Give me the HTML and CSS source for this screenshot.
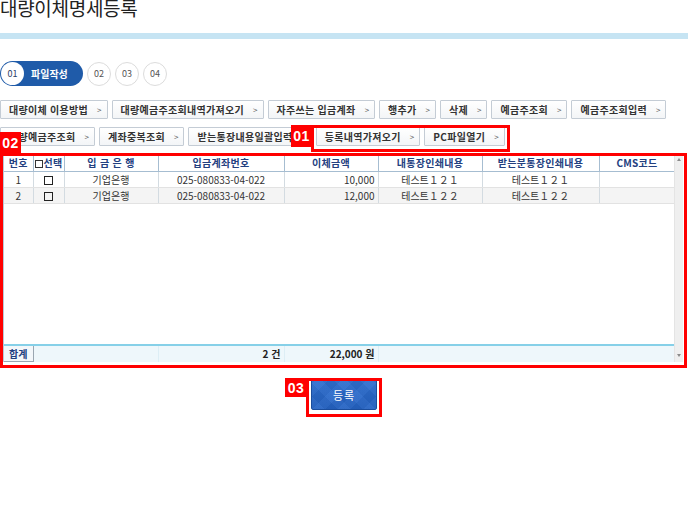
FILE: index.html
```html
<!DOCTYPE html>
<html lang="ko">
<head>
<meta charset="utf-8">
<title>대량이체명세등록</title>
<link rel="stylesheet" href="styles.css">
</head>
<body>
<div class="page">
  <h1 class="title">대량이체명세등록</h1>
  <div class="bar"></div>

  <div class="steps">
    <div class="step-active"><span class="step-num">01</span><span class="step-label">파일작성</span></div>
    <span class="step">02</span>
    <span class="step">03</span>
    <span class="step">04</span>
  </div>

  <div class="toolbar">
    <button class="btn">대량이체 이용방법<i class="chev">&gt;</i></button>
    <button class="btn">대량예금주조회내역가져오기<i class="chev">&gt;</i></button>
    <button class="btn">자주쓰는 입금계좌<i class="chev">&gt;</i></button>
    <button class="btn">행추가<i class="chev">&gt;</i></button>
    <button class="btn">삭제<i class="chev">&gt;</i></button>
    <button class="btn">예금주조회<i class="chev">&gt;</i></button>
    <button class="btn">예금주조회입력<i class="chev">&gt;</i></button>
    <button class="btn">대량예금주조회<i class="chev">&gt;</i></button>
    <button class="btn">계좌중복조회<i class="chev">&gt;</i></button>
    <button class="btn">받는통장내용일괄입력<i class="chev">&gt;</i></button>
    <button class="btn">등록내역가져오기<i class="chev">&gt;</i></button>
    <button class="btn">PC파일열기<i class="chev">&gt;</i></button>
  </div>

  <div class="grid">
    <div class="grid-main">
      <table class="tbl">
        <colgroup>
          <col class="c1"><col class="c2"><col class="c3"><col class="c4"><col class="c5"><col class="c6"><col class="c7"><col class="c8">
        </colgroup>
        <thead>
          <tr>
            <th>번호</th>
            <th><span class="hbox"></span>선택</th>
            <th>입 금 은 행</th>
            <th>입금계좌번호</th>
            <th>이체금액</th>
            <th>내통장인쇄내용</th>
            <th>받는분통장인쇄내용</th>
            <th>CMS코드</th>
          </tr>
        </thead>
        <tbody>
          <tr>
            <td>1</td>
            <td><span class="cbox"></span></td>
            <td>기업은행</td>
            <td>025-080833-04-022</td>
            <td class="num">10,000</td>
            <td>테스트１２１</td>
            <td>테스트１２１</td>
            <td></td>
          </tr>
          <tr class="alt">
            <td>2</td>
            <td><span class="cbox"></span></td>
            <td>기업은행</td>
            <td>025-080833-04-022</td>
            <td class="num">12,000</td>
            <td>테스트１２２</td>
            <td>테스트１２２</td>
            <td></td>
          </tr>
        </tbody>
      </table>
      <div class="grid-space"></div>
      <table class="tbl foot">
        <colgroup>
          <col class="c1"><col class="c2"><col class="c3"><col class="c4"><col class="c5"><col class="c6"><col class="c7"><col class="c8">
        </colgroup>
        <tr>
          <td class="sum-label">합계</td>
          <td colspan="2"></td>
          <td class="num">2 건</td>
          <td class="num">22,000 원</td>
          <td colspan="3"></td>
        </tr>
      </table>
    </div>
    <div class="scrollbar">
      <span class="arrow up"></span>
      <span class="arrow down"></span>
    </div>
  </div>

  <div class="actions">
    <button class="submit">등록</button>
  </div>

  <div class="frame f1"></div>
  <span class="badge b1">01</span>
  <div class="frame f2"></div>
  <span class="badge b2">02</span>
  <div class="frame f3"></div>
  <span class="badge b3">03</span>
</div>
</body>
</html>
```

FILE: styles.css
```css
* { box-sizing: border-box; }
html, body { margin: 0; padding: 0; background: #fff; }
body {
  font-family: "Noto Sans CJK KR", "Noto Sans", "Liberation Sans", sans-serif;
  color: #333;
}
.page {
  position: relative;
  width: 688px;
  height: 517px;
  overflow: hidden;
}
.title {
  margin: 0;
  font-size: 19px;
  line-height: 21px;
  font-weight: 400;
  color: #222;
  letter-spacing: -0.3px;
  margin-top: -3px;
  margin-bottom: 3px;
  height: 33px;
}
.bar {
  height: 6px;
  background: #c6e4f3;
}
.steps {
  display: flex;
  align-items: center;
  gap: 4px;
  margin-top: 22px;
  height: 25px;
}
.step-active {
  display: flex;
  align-items: center;
  width: 83px;
  height: 25px;
  border-radius: 13px;
  background: #1f5ba9;
  padding-left: 1px;
}
.step-num {
  width: 23px;
  height: 23px;
  border-radius: 50%;
  background: #fff;
  color: #2a3e66;
  font-size: 9px;
  display: flex;
  align-items: center;
  justify-content: center;
}
.step-label {
  margin-left: 7px;
  color: #fff;
  font-size: 10px;
  font-weight: 700;
}
.step {
  width: 24px;
  height: 24px;
  border-radius: 50%;
  border: 1px solid #dcdcdc;
  color: #555;
  font-size: 9px;
  display: flex;
  align-items: center;
  justify-content: center;
}
.toolbar {
  display: flex;
  flex-wrap: wrap;
  gap: 8px 4px;
  margin-top: 14px;
}
.btn {
  height: 19px;
  padding: 0 5px 0 8px;
  border: 1px solid #c4ccd5;
  border-radius: 1px;
  background: linear-gradient(#ffffff, #f3f5f7);
  font-family: inherit;
  font-size: 10px;
  font-weight: 700;
  color: #333;
  display: flex;
  align-items: center;
  white-space: nowrap;
  line-height: 1;
  letter-spacing: 0.3px;
}
.chev {
  font-style: normal;
  font-size: 8px;
  font-weight: 400;
  color: #555;
  margin-left: 9px;
  letter-spacing: 0;
}
.grid {
  display: flex;
  margin-top: 7px;
  margin-left: 3px;
  width: 680px;
  height: 209px;
}
.grid-main {
  width: 671px;
  display: flex;
  flex-direction: column;
  border-left: 1px solid #b9c9d6;
}
.tbl {
  width: 671px;
  border-collapse: collapse;
  table-layout: fixed;
  font-size: 10px;
}
.c1 { width: 29px; }
.c2 { width: 31px; }
.c3 { width: 94px; }
.c4 { width: 126px; }
.c5 { width: 94px; }
.c6 { width: 104px; }
.c7 { width: 117px; }
.c8 { width: 76px; }
.tbl th {
  height: 18px;
  padding: 0;
  font-weight: 700;
  color: #23407f;
  border-right: 1px solid #a6bdd1;
  border-bottom: 1px solid #a6bdd1;
  border-top: 1px solid #dfe7ee;
  background: #fff;
  white-space: nowrap;
  letter-spacing: 0.3px;
}
.hbox {
  display: inline-block;
  width: 8px;
  height: 8px;
  border: 1px solid #333;
  margin-right: 1px;
  vertical-align: -1px;
}
.tbl td {
  height: 16px;
  padding: 0;
  text-align: center;
  color: #333;
  border-right: 1px solid #d3dbe1;
  border-bottom: 1px solid #e2e2e2;
  white-space: nowrap;
}
.tbl tr.alt td { background: #f4f4f4; }
.tbl td.num { text-align: right; padding-right: 3px; }
.cbox {
  display: inline-block;
  width: 9px;
  height: 9px;
  border: 1px solid #222;
  vertical-align: -1px;
}
.grid-space { flex: 1; }
.foot td {
  height: 17px;
  background: #eef7fb;
  border-top: 2px solid #86d0e8;
  border-right: 1px solid #ddeef5;
  border-bottom: 0;
  font-weight: 700;
  color: #222;
}
.foot td.sum-label {
  color: #23407f;
  border-right: 1px solid #9aa6b1;
  border-bottom: 1px solid #9aa6b1;
  background: #f3f7fa;
}
.scrollbar {
  position: relative;
  width: 9px;
  background: #efefef;
  border-left: 1px solid #e4e4e4;
}
.arrow {
  position: absolute;
  left: 2px;
  width: 0;
  height: 0;
  border-left: 2.5px solid transparent;
  border-right: 2.5px solid transparent;
}
.arrow.up { top: 5px; border-bottom: 3px solid #8a8a8a; }
.arrow.down { bottom: 5px; border-top: 3px solid #8a8a8a; }
.actions {
  display: flex;
  justify-content: flex-start;
  margin-top: 17px;
  padding-left: 311px;
}
.submit {
  width: 66px;
  height: 31px;
  border: 1px solid #1b4d9c;
  border-radius: 2px;
  background:
    repeating-linear-gradient(45deg, rgba(255,255,255,0.03) 0 9px, rgba(0,0,0,0.03) 9px 18px),
    repeating-linear-gradient(-45deg, rgba(255,255,255,0.03) 0 9px, rgba(0,0,0,0.03) 9px 18px),
    linear-gradient(#2f6fcf, #2462c2);
  color: #fff;
  font-family: inherit;
  font-size: 11px;
  letter-spacing: 1px;
  padding: 0;
}
.frame {
  position: absolute;
  border: 3px solid #ff0000;
}
.f1 { left: 311px; top: 125px; width: 199px; height: 27px; }
.f2 { left: 0; top: 153px; width: 687px; height: 215px; }
.f3 { left: 306px; top: 378px; width: 76px; height: 39px; }
.badge {
  position: absolute;
  background: #ff0000;
  color: #fff;
  font-family: "Liberation Sans", "DejaVu Sans", sans-serif;
  font-weight: 700;
  font-size: 14px;
  display: flex;
  align-items: center;
  justify-content: center;
  letter-spacing: 0.5px;
}
.b1 { left: 291px; top: 125px; width: 21px; height: 22px; }
.b2 { left: 0; top: 132px; width: 21px; height: 22px; }
.b3 { left: 285px; top: 378px; width: 22px; height: 19px; }
```
